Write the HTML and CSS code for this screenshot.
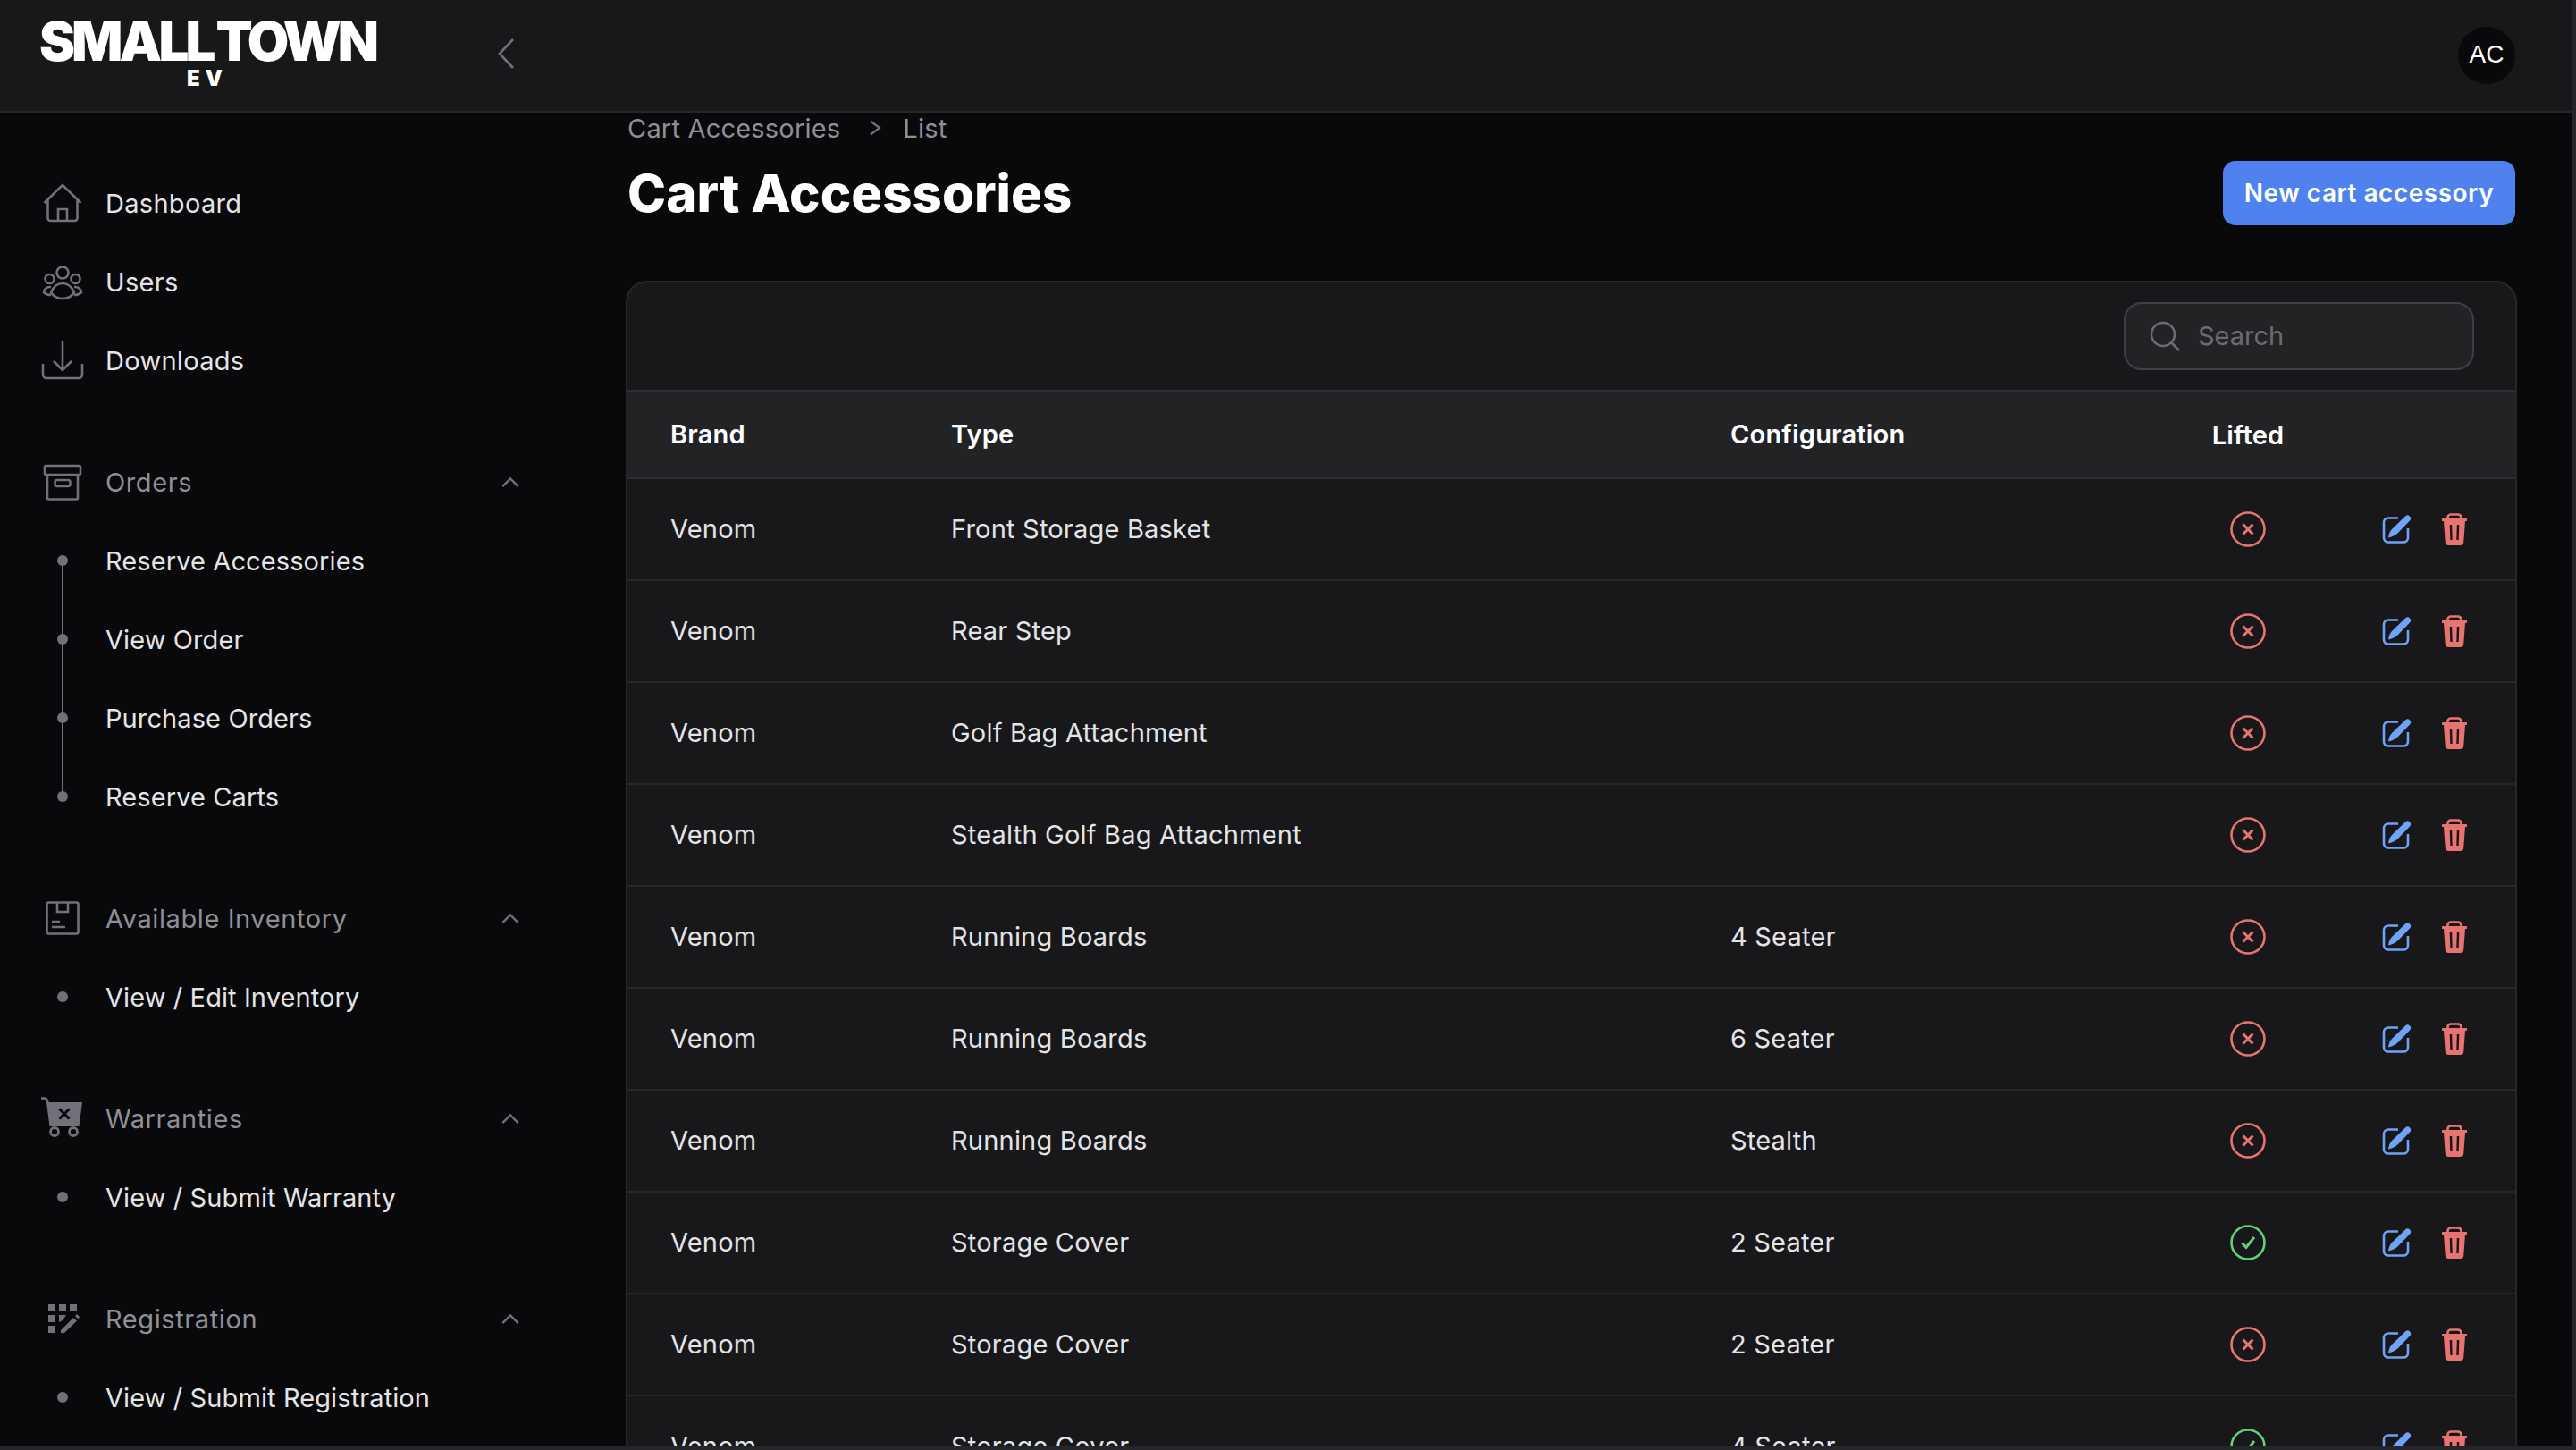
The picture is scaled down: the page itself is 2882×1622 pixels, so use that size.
FILE: index.html
```html
<!DOCTYPE html>
<html lang="en">
<head>
    <meta charset="UTF-8">
    <title>Cart Accessories - Small Town EV</title>
    <link rel="stylesheet" href="styles.css">
</head>
<body>
    <svg class="sprite" xmlns="http://www.w3.org/2000/svg">
        <symbol id="i-no" viewBox="0 0 40 40">
            <circle cx="20" cy="20" r="18.5" fill="none" stroke="currentColor" stroke-width="2.6"/>
            <path d="M14.5 14.5l11 11M25.5 14.5l-11 11" fill="none" stroke="currentColor" stroke-width="3"/>
        </symbol>
        <symbol id="i-yes" viewBox="0 0 40 40">
            <circle cx="20" cy="20" r="18.5" fill="none" stroke="currentColor" stroke-width="2.6"/>
            <path d="M13.5 20.5l4.5 5L27 14" fill="none" stroke="currentColor" stroke-width="3"/>
        </symbol>
        <symbol id="i-edit" viewBox="0 0 36 36">
            <path d="M19 5.500H8a5 5 0 0 0-5 5v17a5 5 0 0 0 5 5h17a5 5 0 0 0 5-5V17" fill="none" stroke="currentColor" stroke-width="2.600"/>
            <path d="M8 27.500c1-5.500 2-7.500 5-10.500L27 3.500a3.500 3.500 0 0 1 5 5L18.500 22.500c-3.500 3-6.500 4-10.500 5z" fill="currentColor"/>
        </symbol>
        <symbol id="i-trash" viewBox="0 0 28 36">
            <path d="M6.500 6V5a3.500 3.500 0 0 1 3.500-3.500h8A3.500 3.500 0 0 1 21.500 5v1" fill="none" stroke="currentColor" stroke-width="2.600"/>
            <path d="M1 6h26a1 1 0 0 1 0 3H1a1 1 0 0 1 0-3z" fill="currentColor"/>
            <path fill-rule="evenodd" d="M2 9h24l-1.700 23a4 4 0 0 1-4 4H7.700a4 4 0 0 1-4-4zM8.700 13l.6 17h2.400l-.5-17zM16.800 13l-.5 17h2.400l.6-17z" fill="currentColor"/>
        </symbol>
        <symbol id="i-chev-up" viewBox="0 0 24 14">
            <path d="M2.500 12L12 2.500 21.500 12" fill="none" stroke="currentColor" stroke-width="2.600"/>
        </symbol>
    </svg>

    <div class="shell">
        <header class="topbar">
            <div class="logo">
                <span class="logo-main">SMALL TOWN</span>
                <span class="logo-sub">EV</span>
            </div>
            <svg class="collapse" viewBox="0 0 20 36"><path d="M18 2L3 18l15 16" fill="none" stroke="currentColor" stroke-width="2.600"/></svg>
            <div class="avatar">AC</div>
        </header>

        <div class="layout">
            <nav class="sidebar">
                <div class="nav-group">
                    <a class="nav-item">
                        <svg class="nav-icon" viewBox="0 0 48 48" fill="none" stroke="currentColor" stroke-width="2.600"><path d="M3.500 24L24 4l20.500 20M7.500 21v20a3 3 0 0 0 3 3h27a3 3 0 0 0 3-3V21M19 44V31h10v13"/></svg>
                        <span>Dashboard</span>
                    </a>
                    <a class="nav-item">
                        <svg class="nav-icon" viewBox="0 0 48 48" fill="none" stroke="currentColor" stroke-width="2.600"><g transform="translate(0 5)"><circle cx="24" cy="9" r="6.500"/><circle cx="9.500" cy="16" r="5"/><circle cx="38.500" cy="16" r="5"/><path d="M11 31c3-7 8-10 13-10s10 3 13 10c-3 5-8 7-13 7s-10-2-13-7zM11 25c-5-.5-8 3-8 6 2 2 5 3 8 3M37 25c5-.5 8 3 8 6-2 2-5 3-8 3"/></g></svg>
                        <span>Users</span>
                    </a>
                    <a class="nav-item">
                        <svg class="nav-icon" viewBox="0 0 48 48" fill="none" stroke="currentColor" stroke-width="2.600"><path d="M24 2v33M14 25l10 10 10-10M2 28v12a4 4 0 0 0 4 4h36a4 4 0 0 0 4-4V28"/></svg>
                        <span>Downloads</span>
                    </a>
                </div>

                <div class="nav-group">
                    <div class="nav-item nav-label">
                        <svg class="nav-icon" viewBox="0 0 48 48" fill="none" stroke="currentColor" stroke-width="2.600"><rect x="4" y="6" width="40" height="10" rx="1.500"/><path d="M7 16v26a1.500 1.500 0 0 0 1.500 1.500h31A1.500 1.500 0 0 0 41 42V16"/><rect x="15.500" y="22" width="17" height="7" rx="2.500"/></svg>
                        <span>Orders</span>
                        <svg class="chev"><use href="#i-chev-up"/></svg>
                    </div>
                    <ul class="sub-list has-line">
                        <li class="sub-item"><i class="dot"></i>Reserve Accessories</li>
                        <li class="sub-item"><i class="dot"></i>View Order</li>
                        <li class="sub-item"><i class="dot"></i>Purchase Orders</li>
                        <li class="sub-item"><i class="dot"></i>Reserve Carts</li>
                    </ul>
                </div>

                <div class="nav-group">
                    <div class="nav-item nav-label">
                        <svg class="nav-icon" viewBox="0 0 48 48" fill="none" stroke="currentColor" stroke-width="2.600"><rect x="6.500" y="6.500" width="35" height="35" rx="2"/><path d="M18 6.500V17h12V6.500M12 28h9M12 34h15"/></svg>
                        <span>Available Inventory</span>
                        <svg class="chev"><use href="#i-chev-up"/></svg>
                    </div>
                    <ul class="sub-list">
                        <li class="sub-item"><i class="dot"></i>View / Edit Inventory</li>
                    </ul>
                </div>

                <div class="nav-group">
                    <div class="nav-item nav-label">
                        <svg class="nav-icon" viewBox="0 0 48 48"><path fill="none" stroke="currentColor" stroke-width="2.600" d="M0 1.500h4c1.500 0 2.500 1 3 3L8 8"/><path fill="currentColor" d="M6 6h40l-3.500 27h-33z"/><path fill="none" stroke="#09090b" stroke-width="3" d="M20.500 13.500l11 11M31.500 13.500l-11 11"/><circle cx="15" cy="39" r="4.500" fill="none" stroke="currentColor" stroke-width="2.800"/><circle cx="36" cy="39" r="4.500" fill="none" stroke="currentColor" stroke-width="2.800"/></svg>
                        <span>Warranties</span>
                        <svg class="chev"><use href="#i-chev-up"/></svg>
                    </div>
                    <ul class="sub-list">
                        <li class="sub-item"><i class="dot"></i>View / Submit Warranty</li>
                    </ul>
                </div>

                <div class="nav-group">
                    <div class="nav-item nav-label">
                        <svg class="nav-icon" viewBox="0 0 48 48"><path fill="currentColor" d="M8 8h8v8H8zM20 8h8v8h-8zM32 8h8v8h-8zM8 20h8v8H8zM20 20h8l-4 6-4 2zM8 32h8v8H8zM22 40v-3l14-14 4 3.500L26 40zM38 21l2-2 3 3-1.500 2.500z"/></svg>
                        <span>Registration</span>
                        <svg class="chev"><use href="#i-chev-up"/></svg>
                    </div>
                    <ul class="sub-list">
                        <li class="sub-item"><i class="dot"></i>View / Submit Registration</li>
                    </ul>
                </div>
            </nav>

            <main class="content">
                <div class="breadcrumbs">
                    <span>Cart Accessories</span>
                    <svg class="crumb-sep" viewBox="0 0 14 18"><path d="M2 1.500L12 9 2 16.500" fill="none" stroke="currentColor" stroke-width="2.200"/></svg>
                    <span>List</span>
                </div>

                <div class="page-head">
                    <h1>Cart Accessories</h1>
                    <button class="btn-primary" type="button">New cart accessory</button>
                </div>

                <section class="card">
                    <div class="toolbar">
                        <div class="search">
                            <svg class="search-icon" viewBox="0 0 34 34" fill="none" stroke="currentColor" stroke-width="2.600"><circle cx="15" cy="15" r="13"/><path d="M24.500 24.500L33 33"/></svg>
                            <span class="search-text">Search</span>
                        </div>
                    </div>
                    <table class="data-table">
                        <colgroup>
                            <col class="col-brand"><col class="col-type"><col class="col-config"><col class="col-lifted"><col class="col-actions">
                        </colgroup>
                        <thead>
                            <tr><th>Brand</th><th>Type</th><th>Configuration</th><th class="center">Lifted</th><th></th></tr>
                        </thead>
                        <tbody>
                            <tr><td>Venom</td><td>Front Storage Basket</td><td></td>
                                <td class="center"><svg class="flag no"><use href="#i-no"/></svg></td>
                                <td class="cell-actions"><div class="actions"><svg class="edit"><use href="#i-edit"/></svg><svg class="trash"><use href="#i-trash"/></svg></div></td></tr>
                            <tr><td>Venom</td><td>Rear Step</td><td></td>
                                <td class="center"><svg class="flag no"><use href="#i-no"/></svg></td>
                                <td class="cell-actions"><div class="actions"><svg class="edit"><use href="#i-edit"/></svg><svg class="trash"><use href="#i-trash"/></svg></div></td></tr>
                            <tr><td>Venom</td><td>Golf Bag Attachment</td><td></td>
                                <td class="center"><svg class="flag no"><use href="#i-no"/></svg></td>
                                <td class="cell-actions"><div class="actions"><svg class="edit"><use href="#i-edit"/></svg><svg class="trash"><use href="#i-trash"/></svg></div></td></tr>
                            <tr><td>Venom</td><td>Stealth Golf Bag Attachment</td><td></td>
                                <td class="center"><svg class="flag no"><use href="#i-no"/></svg></td>
                                <td class="cell-actions"><div class="actions"><svg class="edit"><use href="#i-edit"/></svg><svg class="trash"><use href="#i-trash"/></svg></div></td></tr>
                            <tr><td>Venom</td><td>Running Boards</td><td>4 Seater</td>
                                <td class="center"><svg class="flag no"><use href="#i-no"/></svg></td>
                                <td class="cell-actions"><div class="actions"><svg class="edit"><use href="#i-edit"/></svg><svg class="trash"><use href="#i-trash"/></svg></div></td></tr>
                            <tr><td>Venom</td><td>Running Boards</td><td>6 Seater</td>
                                <td class="center"><svg class="flag no"><use href="#i-no"/></svg></td>
                                <td class="cell-actions"><div class="actions"><svg class="edit"><use href="#i-edit"/></svg><svg class="trash"><use href="#i-trash"/></svg></div></td></tr>
                            <tr><td>Venom</td><td>Running Boards</td><td>Stealth</td>
                                <td class="center"><svg class="flag no"><use href="#i-no"/></svg></td>
                                <td class="cell-actions"><div class="actions"><svg class="edit"><use href="#i-edit"/></svg><svg class="trash"><use href="#i-trash"/></svg></div></td></tr>
                            <tr><td>Venom</td><td>Storage Cover</td><td>2 Seater</td>
                                <td class="center"><svg class="flag yes"><use href="#i-yes"/></svg></td>
                                <td class="cell-actions"><div class="actions"><svg class="edit"><use href="#i-edit"/></svg><svg class="trash"><use href="#i-trash"/></svg></div></td></tr>
                            <tr><td>Venom</td><td>Storage Cover</td><td>2 Seater</td>
                                <td class="center"><svg class="flag no"><use href="#i-no"/></svg></td>
                                <td class="cell-actions"><div class="actions"><svg class="edit"><use href="#i-edit"/></svg><svg class="trash"><use href="#i-trash"/></svg></div></td></tr>
                            <tr><td>Venom</td><td>Storage Cover</td><td>4 Seater</td>
                                <td class="center"><svg class="flag yes"><use href="#i-yes"/></svg></td>
                                <td class="cell-actions"><div class="actions"><svg class="edit"><use href="#i-edit"/></svg><svg class="trash"><use href="#i-trash"/></svg></div></td></tr>
                        </tbody>
                    </table>
                </section>
            </main>
        </div>
    </div>
</body>
</html>
```

FILE: styles.css
```css
* { box-sizing: border-box; }
html, body { height: 100%; }
body { margin: 0; padding: 0 4px 4px 0; background: #25262b; font-family: Inter, "Open Sans", sans-serif; font-size: 29px; color: #e4e4e7; overflow: hidden; }
.sprite { display: none; }

.shell { height: 100%; background: #09090b; display: flex; flex-direction: column; overflow: hidden; }

/* top bar */
.topbar { height: 126px; flex: none; display: flex; align-items: center; padding: 0 64px 0 46px; background: #18181b; border-bottom: 2px solid #27272a; }
.logo { width: 372px; height: 96px; padding-top: 2px; display: flex; flex-direction: column; align-items: center; color: #fff; font-weight: 900; line-height: 1; }
.logo-main { font-size: 60px; letter-spacing: -3.9px; word-spacing: -4px; white-space: nowrap; height: 60px; }
.logo-sub { font-size: 24px; letter-spacing: 6px; height: 24px; }
.collapse { width: 20px; height: 36px; margin: 0 0 4px 138px; color: #71717a; }
.avatar { width: 64px; height: 64px; margin-left: auto; padding-bottom: 2px; border-radius: 50%; background: #09090b; color: #fff; display: flex; align-items: center; justify-content: center; font-family: "Liberation Sans", sans-serif; font-size: 28px; }

.layout { flex: 1; display: flex; min-height: 0; }

/* sidebar */
.sidebar { width: 620px; flex: none; padding: 57px 0 0 46px; display: flex; flex-direction: column; gap: 48px; }
.nav-item { height: 88px; display: flex; align-items: center; color: #e4e4e7; letter-spacing: 0.3px; }
.nav-icon { width: 48px; height: 48px; flex: none; margin-right: 24px; color: #71717a; }
.nav-label { color: #8f8f98; padding-right: 38px; letter-spacing: 0.6px; }
.chev { width: 22px; height: 13px; margin-left: auto; color: #71717a; }

.sub-list { list-style: none; margin: 0; padding: 0; position: relative; }
.has-line::before { content: ""; position: absolute; left: 23px; top: 44px; bottom: 44px; width: 2px; background: #71717a; }
.sub-item { height: 88px; display: flex; align-items: center; letter-spacing: 0.1px; }
.dot { width: 12px; height: 12px; margin: 0 42px 0 18px; border-radius: 50%; background: #71717a; position: relative; }

/* page */
.content { flex: 1; min-width: 0; padding: 0 62px 0 80px; }
.breadcrumbs { height: 36px; padding: 0 0 2px 2px; display: flex; align-items: center; color: #8f8f98; letter-spacing: 0.2px; }
.crumb-sep { width: 14px; height: 18px; margin: 0 24px 0 32px; color: #71717a; }
.page-head { margin-top: 18px; height: 72px; padding-right: 2px; display: flex; align-items: center; justify-content: space-between; }
h1 { margin: 0; padding-left: 2px; font-size: 58px; font-weight: 800; color: #fff; letter-spacing: 0.1px; }
.btn-primary { width: 327px; height: 72px; border: 0; border-radius: 14px; background: #4f82ee; color: #fff; font-family: inherit; font-size: 28px; font-weight: 600; letter-spacing: 0.5px; }

/* table card */
.card { margin-top: 62px; background: #18181b; border: 2px solid #27272a; border-bottom: 0; border-radius: 24px 24px 0 0; }
.toolbar { height: 120px; display: flex; align-items: center; justify-content: flex-end; padding-right: 46px; }
.search { width: 392px; height: 76px; display: flex; align-items: center; padding-left: 27px; background: #232326; border: 2px solid #3f3f46; border-radius: 20px; color: #6b6b73; }
.search-icon { width: 34px; height: 34px; margin-right: 20px; flex: none; }
.search-text { padding-bottom: 2px; }

.data-table { width: 100%; border-collapse: collapse; table-layout: fixed; }
.col-brand { width: 314px; }
.col-type { width: 872px; }
.col-config { width: 540px; }
.col-lifted { width: 174px; }
.data-table th { height: 98px; padding: 0 0 2px 48px; background: #232326; border-top: 2px solid #2e2e33; border-bottom: 2px solid #2e2e33; text-align: left; font-weight: 600; color: #fff; letter-spacing: 0.2px; }
.data-table td { height: 114px; padding: 0 0 2px 48px; border-bottom: 2px solid #27272a; letter-spacing: 0.2px; }
.data-table .center { padding: 0; text-align: center; }
.data-table .cell-actions { padding: 0 0 0 48px; }
.flag { width: 40px; height: 40px; display: inline-block; vertical-align: middle; }
.no { color: #e87471; }
.yes { color: #62d07c; }
.actions { display: flex; align-items: center; gap: 32px; padding-left: 14px; }
.edit { width: 36px; height: 36px; color: #6fa3f6; }
.trash { width: 28px; height: 36px; color: #e87471; }
```
